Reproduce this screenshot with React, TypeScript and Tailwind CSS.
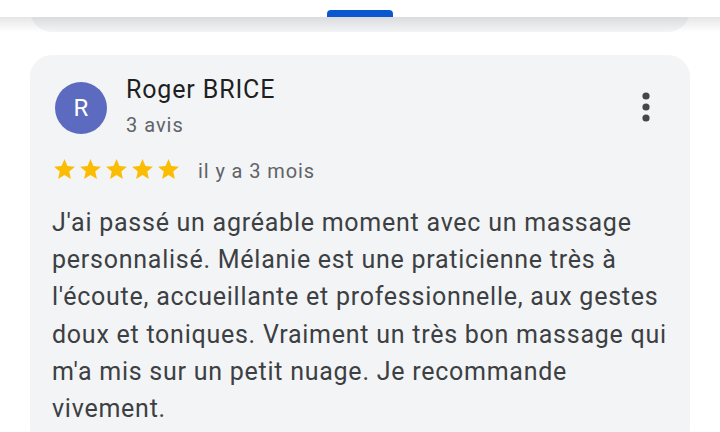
const FONT = { fontFamily: 'Roboto, "Noto Sans", Arial, sans-serif' };

const REVIEW =
  "J'ai passé un agréable moment avec un massage personnalisé. Mélanie est une praticienne très à l'écoute, accueillante et professionnelle, aux gestes doux et toniques. Vraiment un très bon massage qui m'a mis sur un petit nuage. Je recommande vivement.";

function Star() {
  return (
    <svg viewBox="0 0 24 24" className="h-[25px] w-[25px] shrink-0" fill="#fbbc04">
      <path d="M12 17.27L18.18 21l-1.64-7.03L22 9.24l-7.19-.61L12 2 9.19 8.63 2 9.24l5.46 4.73L5.82 21z" />
    </svg>
  );
}

function MoreIcon() {
  return (
    <svg viewBox="0 0 8 30" className="h-[30px] w-[8px]" fill="#444746">
      <circle cx="4" cy="4" r="3.6" />
      <circle cx="4" cy="15" r="3.6" />
      <circle cx="4" cy="26" r="3.6" />
    </svg>
  );
}

export default function App() {
  return (
    <div className="h-[432px] w-full overflow-hidden bg-white" style={FONT}>
      {/* top tab bar */}
      <div className="flex h-[17px] items-end justify-center bg-white">
        <div className="h-[7px] w-[66px] rounded-t-[4px] bg-[#0b57d0]" />
      </div>

      {/* bottom of previous card, with the bar's shadow */}
      <div className="relative">
        <div className="mx-[30px] h-[15px] overflow-hidden">
          <div className="-mt-[25px] h-[40px] rounded-b-[22px] bg-[#f3f4f6]" />
        </div>
        <div className="absolute inset-x-0 top-0 h-[15px] bg-gradient-to-b from-black/10 to-transparent" />
      </div>

      {/* review card */}
      <div className="mx-[30px] mt-[23px] rounded-[22px] bg-[#f3f4f6] pl-[22px] pr-[16px] pt-[19px] pb-6">
        <div className="flex items-start">
          <div className="ml-[3px] mt-[8px] flex h-[52px] w-[52px] shrink-0 items-center justify-center rounded-full bg-[#5c6bc0] text-[24px] text-white">
            R
          </div>
          <div className="ml-[19px] flex flex-col">
            <span className="text-[25px] leading-[32px] tracking-[0.85px] text-[#1f1f1f]">Roger BRICE</span>
            <span className="mt-[5px] text-[20px] leading-[28px] tracking-[1px] text-[#5f6368]">3 avis</span>
          </div>
          <div className="ml-auto mr-[24px] mt-[18px]">
            <MoreIcon />
          </div>
        </div>

        <div className="mt-[16px] flex h-[28px] items-center">
          <div className="flex gap-[1px]">
            <Star />
            <Star />
            <Star />
            <Star />
            <Star />
          </div>
          <span className="ml-[17px] mt-[4px] text-[20px] leading-[28px] tracking-[0.9px] text-[#5f6368]">
            il y a 3 mois
          </span>
        </div>

        <p className="mt-[21px] text-[25px] leading-[37.2px] tracking-[0.75px] text-[#3c4043]">{REVIEW}</p>
      </div>
    </div>
  );
}
